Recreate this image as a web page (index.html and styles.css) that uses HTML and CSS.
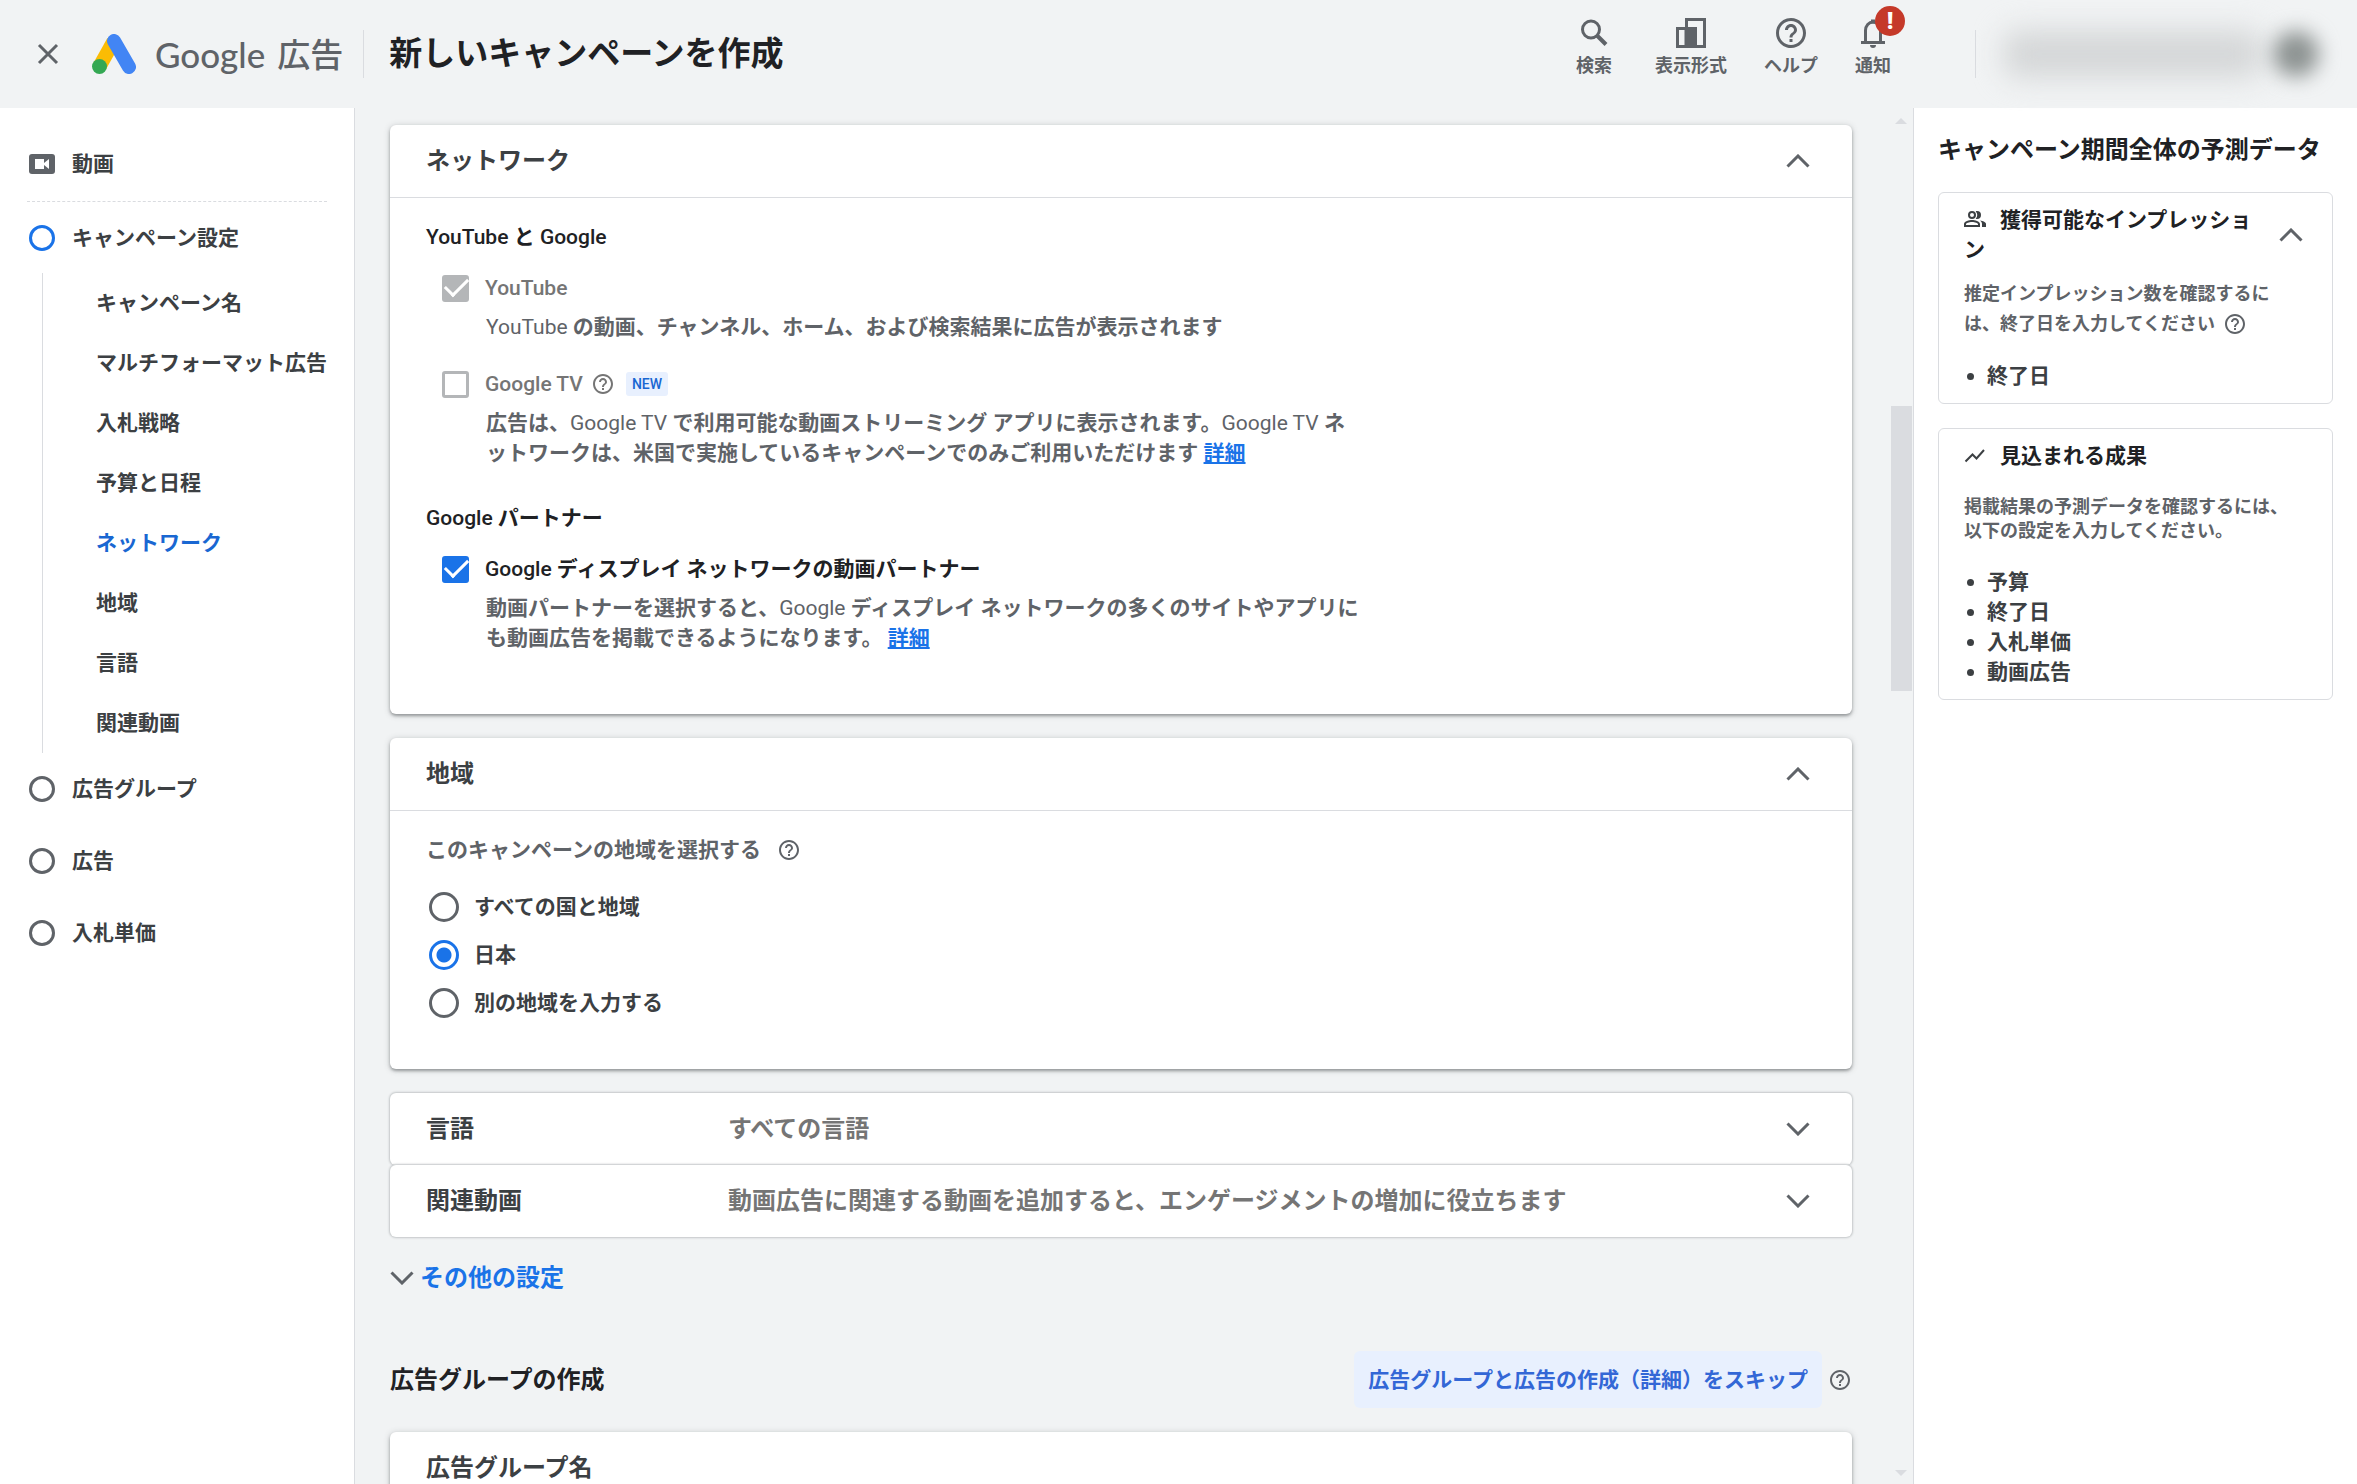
FILE: index.html
```html
<!DOCTYPE html>
<html lang="ja">
<head>
<meta charset="utf-8">
<title>新しいキャンペーンを作成 - Google 広告</title>
<meta name="viewport" content="width=device-width, initial-scale=1">
<link rel="stylesheet" href="styles.css">
</head>
<body>
<svg class="defs" aria-hidden="true">
  <symbol id="help" viewBox="2 2 20 20"><path d="M11 18h2v-2h-2v2zm1-16C6.480 2 2 6.480 2 12s4.480 10 10 10 10-4.480 10-10S17.520 2 12 2zm0 18c-4.410 0-8-3.590-8-8s3.590-8 8-8 8 3.590 8 8-3.590 8-8 8zm0-14c-2.210 0-4 1.790-4 4h2c0-1.100.9-2 2-2s2 .9 2 2c0 2-3 1.750-3 5h2c0-2.250 3-2.500 3-5 0-2.210-1.790-4-4-4z"/></symbol>
  <symbol id="down" viewBox="0 0 24 14"><path d="M1.500 1.500 12 12 22.500 1.500" fill="none" stroke="currentColor" stroke-width="3"/></symbol>
  <symbol id="up" viewBox="0 0 24 14"><path d="M1.500 12.500 12 2 22.500 12.500" fill="none" stroke="currentColor" stroke-width="3"/></symbol>
</svg>

<header class="topbar">
  <button class="close" aria-label="閉じる"><svg viewBox="0 0 22 22"><path d="M2 2 20 20M20 2 2 20" fill="none" stroke="currentColor" stroke-width="3"/></svg></button>
  <a class="brand" href="#">
    <svg class="ads-logo" viewBox="0 0 44 40">
      <path d="M7.500 32.500 21.500 7.500" stroke="#fbbc04" stroke-width="14"/>
      <path d="M22 7 37 33" stroke="#4285f4" stroke-width="14" stroke-linecap="round"/>
      <circle cx="7.500" cy="32.500" r="7.500" fill="#34a853"/>
    </svg>
    <span class="brand-name">Google</span><span class="brand-product">広告</span>
  </a>
  <h1 class="page-title">新しいキャンペーンを作成</h1>
  <nav class="tools">
    <button class="tool"><svg viewBox="0 0 30 30"><circle cx="12" cy="11.500" r="8.500" fill="none" stroke="currentColor" stroke-width="3"/><path d="M18 17.500 27 26.500" stroke="currentColor" stroke-width="4"/></svg>検索</button>
    <button class="tool"><svg viewBox="0 0 30 30"><path d="M10.500 10V1.500h18v27H10" fill="none" stroke="currentColor" stroke-width="3"/><path d="M1.500 10.500H10v18H1.500z" fill="none" stroke="currentColor" stroke-width="3"/><path d="M9 9h12v20H9z" fill="currentColor"/></svg>表示形式</button>
    <button class="tool"><svg><use href="#help"/></svg>ヘルプ</button>
    <button class="tool"><svg viewBox="0 0 30 30"><path d="M3 24.500h24M7.500 24V12.500a7.500 8.500 0 0 1 15 0V24" fill="none" stroke="currentColor" stroke-width="3"/><path d="M13 1.500h4v4h-4zM12 27h6a3 3 0 0 1-6 0z" fill="currentColor"/></svg>通知<span class="badge">!</span></button>
  </nav>
  <div class="account"><span class="account-lines"></span><span class="account-avatar"></span></div>
</header>

<div class="layout">
  <nav class="sidebar">
    <a class="step step-type" href="#"><svg viewBox="0 0 26 20"><rect width="26" height="20" rx="3" fill="#5f6368"/><path d="M6 5h9v4l5-4v10l-5-4v4H6z" fill="#fff"/></svg>動画</a>
    <a class="step" href="#"><i class="dot dot-current"></i>キャンペーン設定</a>
    <div class="substeps">
      <a href="#">キャンペーン名</a>
      <a href="#">マルチフォーマット広告</a>
      <a href="#">入札戦略</a>
      <a href="#">予算と日程</a>
      <a class="active" href="#">ネットワーク</a>
      <a href="#">地域</a>
      <a href="#">言語</a>
      <a href="#">関連動画</a>
    </div>
    <a class="step" href="#"><i class="dot"></i>広告グループ</a>
    <a class="step" href="#"><i class="dot"></i>広告</a>
    <a class="step" href="#"><i class="dot"></i>入札単価</a>
  </nav>

  <main class="content">
    <section class="card">
      <button class="card-head"><span>ネットワーク</span><svg class="chevron"><use href="#up"/></svg></button>
      <div class="card-body network">
        <h3><span class="medium">YouTube</span> と <span class="medium">Google</span></h3>
        <label class="option muted"><input type="checkbox" class="check" checked disabled><span class="medium">YouTube</span></label>
        <p class="desc"><span class="latin">YouTube</span> の動画、チャンネル、ホーム、および検索結果に広告が表示されます</p>
        <div class="option-row">
          <label class="option muted"><input type="checkbox" class="check" disabled><span class="medium">Google TV</span></label>
          <svg class="help"><use href="#help"/></svg><span class="tag">NEW</span>
        </div>
        <p class="desc">広告は、<span class="latin">Google TV</span> で利用可能な動画ストリーミング アプリに表示されます。<span class="latin">Google TV</span> ネットワークは、米国で実施しているキャンペーンでのみご利用いただけます <a href="#">詳細</a></p>
        <h3><span class="medium">Google</span> パートナー</h3>
        <label class="option"><input type="checkbox" class="check" checked><span><span class="medium">Google</span> ディスプレイ ネットワークの動画パートナー</span></label>
        <p class="desc">動画パートナーを選択すると、<span class="latin">Google</span> ディスプレイ ネットワークの多くのサイトやアプリにも動画広告を掲載できるようになります。 <a href="#">詳細</a></p>
      </div>
    </section>

    <section class="card">
      <button class="card-head"><span>地域</span><svg class="chevron"><use href="#up"/></svg></button>
      <div class="card-body region">
        <p class="prompt">このキャンペーンの地域を選択する<svg class="help"><use href="#help"/></svg></p>
        <label class="choice"><input type="radio" name="region" class="radio">すべての国と地域</label>
        <label class="choice"><input type="radio" name="region" class="radio" checked>日本</label>
        <label class="choice"><input type="radio" name="region" class="radio">別の地域を入力する</label>
      </div>
    </section>

    <div class="collapsed-group">
      <button class="collapsed"><span class="name">言語</span><span class="summary">すべての言語</span><svg class="chevron"><use href="#down"/></svg></button>
      <button class="collapsed"><span class="name">関連動画</span><span class="summary">動画広告に関連する動画を追加すると、エンゲージメントの増加に役立ちます</span><svg class="chevron"><use href="#down"/></svg></button>
    </div>

    <button class="more"><svg class="chevron"><use href="#down"/></svg>その他の設定</button>

    <div class="group-head">
      <h2>広告グループの作成</h2>
      <button class="skip">広告グループと広告の作成（詳細）をスキップ</button>
      <svg class="help"><use href="#help"/></svg>
    </div>

    <section class="card">
      <button class="card-head"><span>広告グループ名</span></button>
      <div class="card-body"></div>
    </section>
  </main>

  <div class="scrollbar" aria-hidden="true"><i class="arrow-up"></i><i class="gap-top"></i><i class="thumb"></i><i class="gap-bottom"></i><i class="arrow-down"></i></div>

  <aside class="forecast">
    <h2>キャンペーン期間全体の予測データ</h2>
    <section class="panel">
      <div class="panel-head">
        <h3><svg class="panel-icon" viewBox="1 4 22 16"><path fill-rule="evenodd" d="M9 12a4 4 0 1 0 0-8 4 4 0 0 0 0 8zm0-6a2 2 0 1 1 0 4 2 2 0 0 1 0-4zM9 13c-2.700 0-8 1.340-8 4v3h16v-3c0-2.660-5.300-4-8-4zm6 5H3v-1c0-.6 2.900-2 6-2s6 1.400 6 2zM14 4c-.5 0-.9.1-1.300.2a6 6 0 0 1 0 7.600c.4.1.8.2 1.300.2a4 4 0 0 0 0-8zM17 13.500c1.200.9 2 2 2 3.500v3h4v-3c0-2-3-3-6-3.500z"/></svg>獲得可能なインプレッション</h3>
        <button class="toggle" aria-label="折りたたむ"><svg class="chevron"><use href="#up"/></svg></button>
      </div>
      <p class="panel-text panel-text-loose">推定インプレッション数を確認するには、終了日を入力してください <svg class="help"><use href="#help"/></svg></p>
      <ul><li>終了日</li></ul>
    </section>
    <section class="panel">
      <h3><svg class="panel-icon" viewBox="0 0 22 16"><path d="M1.500 14.500 8.500 7.500l4 4L20 3" fill="none" stroke="currentColor" stroke-width="2"/></svg>見込まれる成果</h3>
      <p class="panel-text">掲載結果の予測データを確認するには、以下の設定を入力してください。</p>
      <ul><li>予算</li><li>終了日</li><li>入札単価</li><li>動画広告</li></ul>
    </section>
  </aside>
</div>
</body>
</html>
```
FILE: styles.css
```css
* { box-sizing: border-box; margin: 0; padding: 0; }

body {
  height: 100vh;
  display: flex;
  flex-direction: column;
  overflow: hidden;
  background: #f1f3f4;
  color: #3c4043;
  font: 700 21px/30px Roboto, "Noto Sans CJK JP", sans-serif;
}

button { font: inherit; color: inherit; background: none; border: 0; cursor: pointer; }
a { color: inherit; text-decoration: none; }
svg { display: block; flex: none; fill: currentColor; }
h1, h2, h3 { font-weight: 700; color: #202124; }
.defs { position: absolute; width: 0; height: 0; }

.chevron { width: 24px; height: 14px; color: #5f6368; }
.help { width: 20px; height: 20px; color: #5f6368; }

/* Latin words are set lighter than the Japanese around them */
.medium { font-weight: 500; }
.latin { font-weight: 400; }

/* top bar */
.topbar { flex: none; height: 108px; display: flex; align-items: center; color: #5f6368; }
.close { margin-left: 37px; width: 22px; height: 22px; }
.close svg { width: 22px; height: 22px; }
.brand { display: flex; align-items: center; margin-left: 33px; padding-right: 20px; height: 48px; border-right: 1px solid #dadce0; }
.ads-logo { width: 44px; height: 40px; fill: none; }
.brand-name { margin-left: 19px; font: 500 35px/48px Lato, sans-serif; }
.brand-product { margin-left: 12px; padding-top: 4px; font-size: 33px; line-height: 48px; font-weight: 500; }
.page-title { margin-left: 25px; font-size: 33px; line-height: 48px; white-space: nowrap; }
.tools { margin-left: auto; align-self: flex-start; display: flex; gap: 37px; padding-top: 18px; }
.tool { position: relative; display: flex; flex-direction: column; align-items: center; gap: 6px; font-size: 18px; line-height: 24px; }
.tool:first-child { margin-right: 6px; }
.tool svg { width: 30px; height: 30px; }
.badge { position: absolute; left: 20px; top: -12px; width: 30px; height: 30px; border-radius: 50%; background: #c53929; color: #fff; font: 900 24px/30px Roboto, sans-serif; }
.account { display: flex; align-items: center; justify-content: flex-end; gap: 10px; width: 382px; height: 48px; margin-left: 84px; padding-right: 38px; border-left: 1px solid #dadce0; }
.account-lines { width: 260px; height: 48px; border-radius: 16px; background: #d5d7d8; filter: blur(14px); }
.account-avatar { width: 46px; height: 46px; border-radius: 50%; background: #8c9291; filter: blur(10px); }

/* page columns */
.layout { flex: 1; min-height: 0; display: grid; grid-template-columns: 355px 1fr 24px 444px; }

.sidebar { background: #fff; border-right: 1px solid #dadce0; padding-top: 24px; }
.step { display: flex; align-items: center; gap: 17px; height: 72px; padding-left: 29px; }
.step-type { height: 70px; margin: 0 27px; padding: 0 0 5px 2px; border-bottom: 1px dashed #dadce0; }
.step-type + .step { height: 71px; }
.step-type svg { width: 26px; height: 20px; }
.dot { width: 26px; height: 26px; border: 3px solid #5f6368; border-radius: 50%; }
.dot-current { border-color: #1a73e8; }
.substeps { margin: 0 0 0 42px; border-left: 1px solid #dadce0; }
.substeps a { display: block; padding: 15px 0 15px 53px; white-space: nowrap; }
.substeps .active { color: #1967d2; }

/* campaign settings */
.content { overflow: hidden; padding: 17px 37px 0 35px; }
.card { margin-bottom: 24px; border-radius: 6px; background: #fff; box-shadow: 0 2px 3px rgba(60, 64, 67, .4), 0 1px 6px rgba(60, 64, 67, .25); }
.card-head { display: flex; align-items: center; justify-content: space-between; width: 100%; height: 73px; padding: 0 42px 0 36px; border-bottom: 1px solid #dadce0; font-size: 24px; text-align: left; }
.card-body { padding: 24px 36px; }
.network { padding-bottom: 61px; }
.card-body h3 { font-size: 21px; margin-bottom: 21px; }
.option { display: flex; align-items: center; gap: 16px; padding-left: 16px; color: #202124; }
.option-row { display: flex; align-items: center; }
.option-row .help { margin-left: 10px; color: #757575; }
.muted { color: #757575; }
.desc { max-width: 936px; margin: 9px 0 27px; padding-left: 60px; color: #5f6368; }
.desc:has(+ h3) { margin-bottom: 35px; }
.desc:last-child { margin-bottom: 0; }
.desc a { color: #1a73e8; text-decoration: underline; }
.tag { margin-left: 13px; padding: 0 6px; border-radius: 3px; background: #e8f0fe; color: #1967d2; font-size: 14px; line-height: 24px; font-weight: 500; }

.check { appearance: none; flex: none; display: grid; place-items: center; width: 27px; height: 27px; border: 3px solid #5f6368; border-radius: 3px; }
.check:disabled { border-color: #b4b6b8; }
.check:checked { border-color: #1a73e8; background: #1a73e8; }
.check:checked:disabled { border-color: #b4b6b8; background: #b4b6b8; }
.check:checked::after { content: ""; width: 20px; height: 10px; margin-bottom: 8px; border: solid #fff; border-width: 0 0 3px 3px; transform: rotate(-45deg); }

.region { padding-bottom: 51px; }
.prompt { display: flex; align-items: center; gap: 18px; margin-bottom: 27px; color: #5f6368; }
.choice { display: flex; align-items: center; gap: 15px; padding-left: 3px; }
.choice + .choice { margin-top: 18px; }
.radio { appearance: none; width: 30px; height: 30px; border: 3px solid #5f6368; border-radius: 50%; }
.radio:checked { border-color: #1a73e8; background: radial-gradient(circle, #1a73e8 7px, transparent 8px); }

.collapsed { display: flex; align-items: center; width: 100%; height: 72px; padding: 0 42px 0 36px; border-radius: 6px; background: #fff; box-shadow: 0 0 2px 1px #c4c7c9; font-size: 24px; text-align: left; }
.name { width: 302px; }
.summary { flex: 1; color: #757575; }

.more { display: flex; align-items: center; gap: 6px; margin: 26px 0 58px; color: #1a73e8; font-size: 24px; }
.group-head { display: flex; align-items: center; margin-bottom: 24px; padding-right: 2px; }
.group-head h2 { flex: 1; font-size: 24px; }
.skip { height: 57px; margin-right: 8px; padding: 0 14px; border-radius: 6px; background: #e8f0fe; color: #3367d6; }

/* scroll track */
.scrollbar { display: flex; flex-direction: column; align-items: center; padding: 10px 0 8px; }
.scrollbar i { flex: none; }
.scrollbar .gap-top { flex: 281; }
.scrollbar .thumb { flex: 284; width: 21px; background: #dadce0; }
.scrollbar .gap-bottom { flex: 777; }
.arrow-up, .arrow-down { border: 6px solid transparent; border-top-width: 0; border-bottom-color: #dadce0; }
.arrow-down { border-width: 6px 6px 0; border-color: #dadce0 transparent transparent; }

/* forecast column */
.forecast { background: #fff; border-left: 1px solid #dadce0; padding: 27px 24px; }
.forecast h2 { margin-bottom: 27px; font-size: 24px; white-space: nowrap; }
.panel { margin-bottom: 24px; padding: 12px 24px 12px 25px; border: 1px solid #dadce0; border-radius: 6px; }
.panel h3 { font-size: 21px; }
.panel-head { display: flex; align-items: center; gap: 16px; }
.panel-head h3 { flex: 1; }
.toggle { margin-right: 5px; }
.panel-icon { display: inline-block; width: 22px; height: 16px; margin-right: 14px; color: #3c4043; }
.panel-text { max-width: 336px; margin: 24px 0; color: #5f6368; font-size: 18px; line-height: 24px; }
.panel-text-loose { max-width: 320px; margin: 14px 0 22px; line-height: 30px; }
.panel-text .help { display: inline-block; margin-left: 6px; vertical-align: -4px; }
.panel ul { list-style: none; }
.panel li { display: flex; align-items: center; gap: 13px; padding-left: 3px; }
.panel li::before { content: ""; width: 7px; height: 7px; border-radius: 50%; background: #3c4043; }
```
